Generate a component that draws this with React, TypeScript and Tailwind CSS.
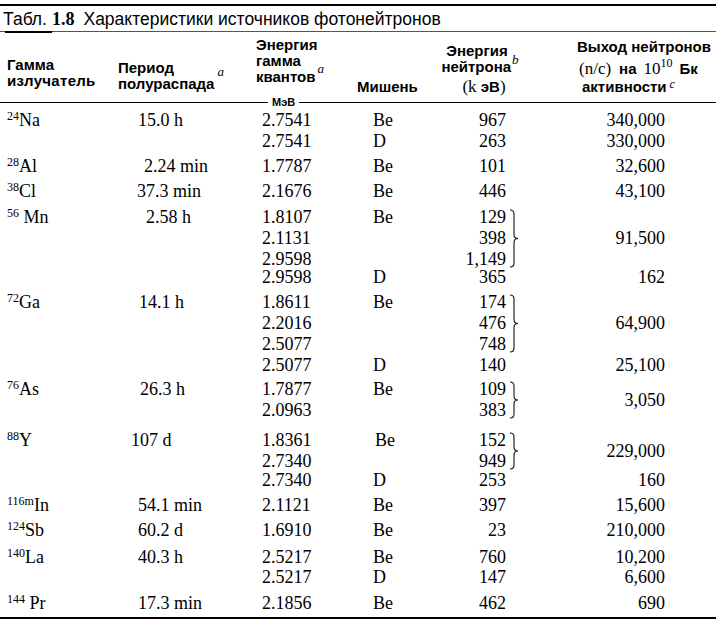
import React from "react";

type Line = { g: string; n: string };

interface Sub {
  target: string;
  lines: Line[];
  yieldValue: string;
  brace?: boolean;
  cls?: string;
  tcls?: string;
}

interface Group {
  mass: string;
  el: string;
  space?: boolean;
  period: string;
  pcls: string;
  gcls: string;
  subs: Sub[];
}

const serif = "font-['Liberation_Serif','Times_New_Roman',serif]";
const sans = "font-['Liberation_Sans',Arial,sans-serif]";

const groups: Group[] = [
  {
    mass: "24",
    el: "Na",
    period: "15.0 h",
    pcls: "pl-[7px]",
    gcls: "pt-[2px]",
    subs: [
      { target: "Be", lines: [{ g: "2.7541", n: "967" }], yieldValue: "340,000" },
      { target: "D", lines: [{ g: "2.7541", n: "263" }], yieldValue: "330,000" },
    ],
  },
  {
    mass: "28",
    el: "Al",
    period: "2.24 min",
    pcls: "pl-[13px]",
    gcls: "pt-[4px]",
    subs: [{ target: "Be", lines: [{ g: "1.7787", n: "101" }], yieldValue: "32,600" }],
  },
  {
    mass: "38",
    el: "Cl",
    period: "37.3 min",
    pcls: "pl-[6px]",
    gcls: "pt-[4px]",
    subs: [{ target: "Be", lines: [{ g: "2.1676", n: "446" }], yieldValue: "43,100" }],
  },
  {
    mass: "56",
    el: "Mn",
    space: true,
    period: "2.58 h",
    pcls: "pl-[15px]",
    gcls: "pt-[5px]",
    subs: [
      {
        target: "Be",
        lines: [
          { g: "1.8107", n: "129" },
          { g: "2.1131", n: "398" },
          { g: "2.9598", n: "1,149" },
        ],
        yieldValue: "91,500",
        brace: true,
      },
      { target: "D", lines: [{ g: "2.9598", n: "365" }], yieldValue: "162", cls: "-mt-[3px]" },
    ],
  },
  {
    mass: "72",
    el: "Ga",
    period: "14.1 h",
    pcls: "pl-[8px]",
    gcls: "pt-[4px]",
    subs: [
      {
        target: "Be",
        lines: [
          { g: "1.8611", n: "174" },
          { g: "2.2016", n: "476" },
          { g: "2.5077", n: "748" },
        ],
        yieldValue: "64,900",
        brace: true,
      },
      { target: "D", lines: [{ g: "2.5077", n: "140" }], yieldValue: "25,100" },
    ],
  },
  {
    mass: "76",
    el: "As",
    period: "26.3 h",
    pcls: "pl-[9px]",
    gcls: "pt-[3px]",
    subs: [
      {
        target: "Be",
        lines: [
          { g: "1.7877", n: "109" },
          { g: "2.0963", n: "383" },
        ],
        yieldValue: "3,050",
        brace: true,
      },
    ],
  },
  {
    mass: "88",
    el: "Y",
    period: "107 d",
    pcls: "pl-[0px]",
    gcls: "pt-[9px]",
    subs: [
      {
        target: "Be",
        lines: [
          { g: "1.8361", n: "152" },
          { g: "2.7340", n: "949" },
        ],
        yieldValue: "229,000",
        brace: true,
        tcls: "pl-[9px]",
      },
      { target: "D", lines: [{ g: "2.7340", n: "253" }], yieldValue: "160", cls: "-mt-[2px]" },
    ],
  },
  {
    mass: "116m",
    el: "In",
    period: "54.1 min",
    pcls: "pl-[7px]",
    gcls: "pt-[4px]",
    subs: [{ target: "Be", lines: [{ g: "2.1121", n: "397" }], yieldValue: "15,600" }],
  },
  {
    mass: "124",
    el: "Sb",
    period: "60.2 d",
    pcls: "pl-[7px]",
    gcls: "pt-[4px]",
    subs: [{ target: "Be", lines: [{ g: "1.6910", n: "23" }], yieldValue: "210,000" }],
  },
  {
    mass: "140",
    el: "La",
    period: "40.3 h",
    pcls: "pl-[7px]",
    gcls: "pt-[6px]",
    subs: [
      { target: "Be", lines: [{ g: "2.5217", n: "760" }], yieldValue: "10,200" },
      { target: "D", lines: [{ g: "2.5217", n: "147" }], yieldValue: "6,600", cls: "-mt-[1px]" },
    ],
  },
  {
    mass: "144",
    el: "Pr",
    space: true,
    period: "17.3 min",
    pcls: "pl-[7px]",
    gcls: "pt-[5px]",
    subs: [{ target: "Be", lines: [{ g: "2.1856", n: "462" }], yieldValue: "690" }],
  },
];

// right curly brace spanning several lines
const Brace = ({ lines }: { lines: number }) => {
  const h = lines * 21 - 4;
  const m = h / 2;
  return (
    <svg width="12" height={h} viewBox={`0 0 12 ${h}`} className="mt-[2px]">
      <path
        d={`M1 1 Q5 1 5 5 L5 ${m - 4} Q5 ${m} 9 ${m} Q5 ${m} 5 ${m + 4} L5 ${h - 5} Q5 ${h - 1} 1 ${h - 1}`}
        fill="none"
        stroke="#111"
        strokeWidth="1.1"
      />
    </svg>
  );
};

const SubRow = ({ sub }: { sub: Sub }) => (
  <div className={`flex ${sub.cls ?? ""}`}>
    <div className="w-[111px] pl-[7px]">
      {sub.lines.map((l, i) => (
        <div key={i} className="h-[21px]">
          {l.g}
        </div>
      ))}
    </div>
    <div className={`w-[64px] h-[21px] ${sub.tcls ?? "pl-[7px]"}`}>{sub.target}</div>
    <div className="w-[76px] text-right">
      {sub.lines.map((l, i) => (
        <div key={i} className="h-[21px]">
          {l.n}
        </div>
      ))}
    </div>
    <div className="w-[16px] pl-[3px]">{sub.brace && <Brace lines={sub.lines.length} />}</div>
    {sub.brace ? (
      <div className="w-[143px] flex items-center justify-end">{sub.yieldValue}</div>
    ) : (
      <div className="w-[143px] h-[21px] text-right">{sub.yieldValue}</div>
    )}
  </div>
);

function Header() {
  return (
    <div className={`flex h-[64px] ${sans} font-bold text-[15px] leading-[16px]`}>
      <div className="w-[118px] pl-[7px] pt-[25px]">
        <div>Гамма</div>
        <div className="tracking-[0.3px]">излучатель</div>
      </div>
      <div className="w-[138px] pt-[28px]">
        <div>Период</div>
        <div>
          полураспада
          <span className={`${serif} italic font-normal text-[13px] relative -top-[13px] ml-[3px]`}>a</span>
        </div>
      </div>
      <div className="w-[101px] pt-[5px]">
        <div>Энергия</div>
        <div>гамма</div>
        <div>
          квантов
          <span className={`${serif} italic font-normal text-[13px] relative -top-[9px] ml-[2px]`}>a</span>
        </div>
      </div>
      <div className="w-[73px] pt-[47px]">Мишень</div>
      <div className="w-[100px] pt-[11px] text-center">
        <div className="pr-[6px]">Энергия</div>
        <div>
          нейтрона
          <span className={`${serif} italic font-normal text-[13px] relative -top-[8px] ml-[1px]`}>b</span>
        </div>
        <div className="mt-[3px] pl-[8px]">
          <span className={`${serif} font-normal text-[17px]`}>(k</span> эВ
          <span className={`${serif} font-normal text-[17px]`}>)</span>
        </div>
      </div>
      <div className="flex-1 pl-[47px] pt-[7px]">
        <div>Выход нейтронов</div>
        <div className="mt-[6px] pl-[2px]">
          <span className={`${serif} font-normal text-[17px]`}>(n/c)</span>
          <span className="ml-[8px]">на</span>
          <span className={`${serif} font-normal text-[17px] ml-[7px]`}>
            10
            <span className="text-[12px] relative -top-[7px]">10</span>
          </span>
          <span className="ml-[7px]">Бк</span>
        </div>
        <div className="mt-[1px] pl-[5px]">
          активности
          <span className={`${serif} italic font-normal text-[12px] relative -top-[4px] ml-[3px]`}>c</span>
        </div>
      </div>
    </div>
  );
}

export default function App() {
  return (
    <div className="w-[716px] h-[632px] bg-white text-black overflow-hidden">
      <div className="mt-[4px] h-[2px] bg-black" />
      <div className={`mt-[3px] h-[20px] pl-[3px] flex items-baseline ${sans} text-[17.5px] leading-[20px]`}>
        <span>Табл.</span>
        <span className={`${serif} font-bold text-[18px] ml-[5px]`}>1.8</span>
        <span className="ml-[9px]">Характеристики источников фотонейтронов</span>
      </div>
      <div className="mt-[2px] relative h-[1px] bg-[#555]">
        <div className="absolute left-[5px] top-0 w-[47px] h-[2px] bg-black" />
      </div>
      <Header />
      <div className="flex items-center h-[12px]">
        <div className="w-[268px] h-px bg-black" />
        <span className={`${sans} font-bold text-[11px] leading-[12px] px-[4px]`}>МэВ</span>
        <div className="flex-1 h-px bg-black" />
      </div>
      <div className={`${serif} text-[18px] leading-[21px] pb-[3px]`}>
        {groups.map((gr, i) => (
          <div key={i} className={`flex ${gr.gcls}`}>
            <div className="w-[131px] pl-[7px] h-[21px]">
              <sup className="text-[12px]">{gr.mass}</sup>
              {gr.space ? " " : ""}
              {gr.el}
            </div>
            <div className={`w-[124px] h-[21px] ${gr.pcls}`}>{gr.period}</div>
            <div className="flex flex-col">
              {gr.subs.map((s, j) => (
                <SubRow key={j} sub={s} />
              ))}
            </div>
          </div>
        ))}
      </div>
      <div className="h-[2px] bg-black" />
    </div>
  );
}
